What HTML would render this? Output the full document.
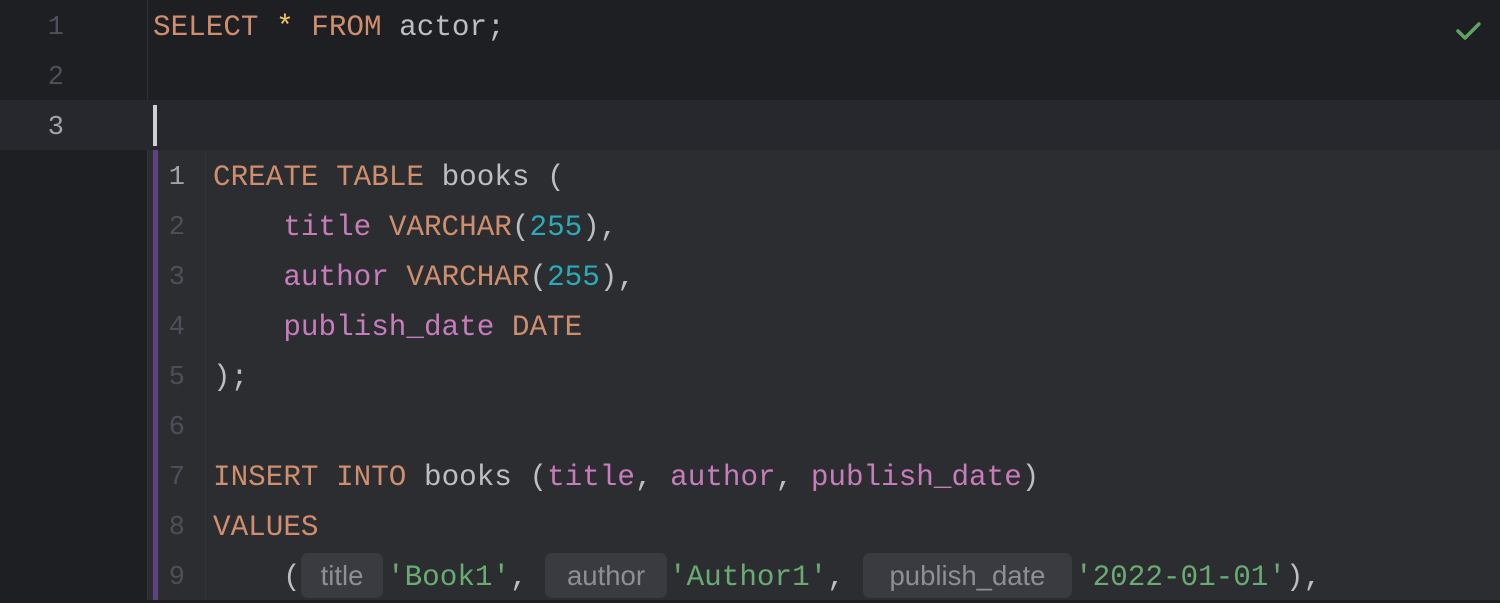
<!DOCTYPE html>
<html><head><meta charset="utf-8"><style>
html,body{margin:0;padding:0;width:1500px;height:600px;overflow:hidden;background:#1e1f22}
.m{font-family:"Liberation Mono",monospace;font-size:29.3px;white-space:pre;position:absolute;line-height:50px}
.k{color:#cf8e6d}.p{color:#c77dbb}.n{color:#2aacb8}.s{color:#6aab73}.t{color:#bcbec4}.y{color:#f2c55c}
.ln{position:absolute;font-family:"Liberation Mono",monospace;font-size:27px;line-height:50px;color:#4b5059;text-align:right}
.h{position:absolute;top:553px;height:45px;background:#393b40;border-radius:7px;color:#8c8f94;font-family:"Liberation Sans",sans-serif;font-size:27.5px;line-height:45px;text-align:center}
</style></head><body>
<div style="position:absolute;left:147px;top:0;width:1px;height:600px;background:#313236"></div>
<div style="position:absolute;left:0;top:100px;width:1500px;height:50px;background:#26282e"></div>
<div style="position:absolute;left:148px;top:150px;width:1352px;height:450px;background:#2b2d30"></div>
<div style="position:absolute;left:153px;top:150px;width:5px;height:450px;background:#5e4283"></div>
<div style="position:absolute;left:205px;top:150px;width:1px;height:450px;background:#313338"></div>
<div style="position:absolute;left:153px;top:105px;width:4px;height:41px;background:#ced0d6"></div>
<div class="ln" style="left:0;top:3px;width:64px">1</div>
<div class="ln" style="left:0;top:53px;width:64px">2</div>
<div class="ln" style="left:0;top:103px;width:64px;color:#a1a3ab">3</div>
<div class="m" style="left:153px;top:3px"><span class="k">SELECT </span><span class="y">*</span><span class="k"> FROM </span><span class="t">actor;</span></div>
<svg style="position:absolute;left:1455px;top:19px" width="30" height="24" viewBox="0 0 30 24"><path d="M3 12 L10 19 L24 5" fill="none" stroke="#5fa362" stroke-width="3.5" stroke-linecap="round" stroke-linejoin="round"/></svg>
<div class="ln" style="left:150px;top:153px;width:35px;color:#a1a3ab">1</div>
<div class="ln" style="left:150px;top:203px;width:35px">2</div>
<div class="ln" style="left:150px;top:253px;width:35px">3</div>
<div class="ln" style="left:150px;top:303px;width:35px">4</div>
<div class="ln" style="left:150px;top:353px;width:35px">5</div>
<div class="ln" style="left:150px;top:403px;width:35px">6</div>
<div class="ln" style="left:150px;top:453px;width:35px">7</div>
<div class="ln" style="left:150px;top:503px;width:35px">8</div>
<div class="ln" style="left:150px;top:553px;width:35px">9</div>
<div class="m" style="left:213px;top:153px"><span class="k">CREATE TABLE </span><span class="t">books (</span></div>
<div class="m" style="left:213px;top:203px"><span class="p">    title </span><span class="k">VARCHAR</span><span class="t">(</span><span class="n">255</span><span class="t">),</span></div>
<div class="m" style="left:213px;top:253px"><span class="p">    author </span><span class="k">VARCHAR</span><span class="t">(</span><span class="n">255</span><span class="t">),</span></div>
<div class="m" style="left:213px;top:303px"><span class="p">    publish_date </span><span class="k">DATE</span></div>
<div class="m" style="left:213px;top:353px"><span class="t">);</span></div>
<div class="m" style="left:213px;top:453px"><span class="k">INSERT INTO </span><span class="t">books (</span><span class="p">title</span><span class="t">, </span><span class="p">author</span><span class="t">, </span><span class="p">publish_date</span><span class="t">)</span></div>
<div class="m" style="left:213px;top:503px"><span class="k">VALUES</span></div>
<div class="m t" style="left:283px;top:553px">(</div>
<div class="h" style="left:301px;width:82px">title</div>
<div class="m" style="left:387px;top:553px"><span class="s">'Book1'</span><span class="t">,</span></div>
<div class="h" style="left:545px;width:122px">author</div>
<div class="m" style="left:669px;top:553px"><span class="s">'Author1'</span><span class="t">,</span></div>
<div class="h" style="left:863px;width:209px">publish_date</div>
<div class="m" style="left:1075px;top:553px"><span class="s">'2022-01-01'</span><span class="t">),</span></div>
</body></html>
